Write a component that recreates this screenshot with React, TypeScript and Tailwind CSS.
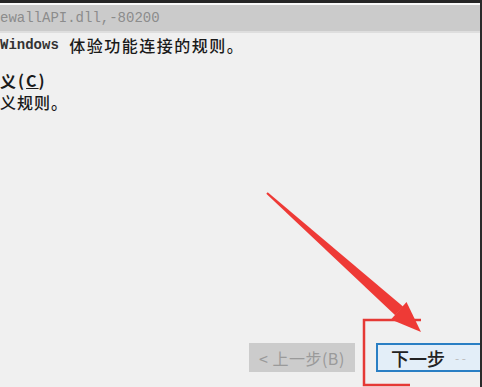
import React from "react";

const cjk = { fontFamily: '"Noto Sans CJK SC", "Noto Sans", sans-serif' };
const mono = { fontFamily: '"Liberation Mono", "DejaVu Sans Mono", monospace' };

export default function App() {
  return (
    <div className="relative w-[482px] h-[387px] overflow-hidden bg-[#f0f0f0] flex flex-col border-r-2 border-[#2a2a2a]">
      <div className="h-[3px] bg-[#262626]" />
      <div className="h-[2px] bg-[#fafafa]" />
      <div className="h-[28px] bg-[#cbcbcb] flex items-center pl-0 border-b-2 border-[#dedede]">
        <span className="text-[14px] text-[#8c8c8c] leading-none" style={mono}>ewallAPI.dll,-80200</span>
      </div>
      <div className="flex flex-col pl-0 pt-[3px] text-[#1a1a1a]">
        <div className="h-[17px] flex items-center whitespace-pre">
          <span className="text-[14px] leading-none font-semibold text-[#333]" style={mono}>Windows </span>
          <span className="text-[16px] leading-none font-medium ml-[2px] tracking-[1.5px]" style={cjk}>体验功能连接的规则。</span>
        </div>
        <div className="h-[17px] mt-[18px] flex items-center whitespace-pre">
          <span className="text-[16px] leading-none font-bold" style={cjk}>义</span>
          <span className="text-[16px] leading-none font-bold tracking-[2px] ml-[2px]" style={cjk}>(<span className="underline">C</span>)</span>
        </div>
        <div className="h-[17px] mt-[5px] flex items-center whitespace-pre">
          <span className="text-[16px] leading-none font-medium tracking-[1px]" style={cjk}>义规则。</span>
        </div>
      </div>
      <div className="flex-1" />
      <div className="flex justify-end items-center gap-[21px] pb-[15px] -mr-[14px]">
        <div className="w-[106px] shrink-0 h-[29px] bg-[#cccccc] flex items-center pl-[10px] text-[#9a9a9a] whitespace-nowrap">
          <span className="text-[16px] leading-none tracking-[0.5px]" style={cjk}>&lt; 上一步(B)</span>
        </div>
        <div className="w-[118px] shrink-0 h-[29px] bg-[#e3eef8] border-2 border-[#2a7fc4] flex items-center pl-[13px] text-[#222] whitespace-nowrap">
          <span className="text-[18px] leading-none font-medium" style={cjk}>下一步</span>
          <span className="text-[12px] leading-none text-[#bbb] ml-[10px]" style={cjk}>- -</span>
        </div>
      </div>
      <svg className="absolute left-0 top-0 pointer-events-none" width="482" height="387" viewBox="0 0 482 387">
        <polyline points="421,320 364,320 364,385 410,385" fill="none" stroke="#e53935" strokeWidth="2.5" />
        <polygon points="266.3,193.8 267.7,192.2 403,306.4 395.2,315.2" fill="#ee3a36" />
        <polygon points="421,332 391,319.5 406.5,302" fill="#ee3a36" />
      </svg>
    </div>
  );
}
